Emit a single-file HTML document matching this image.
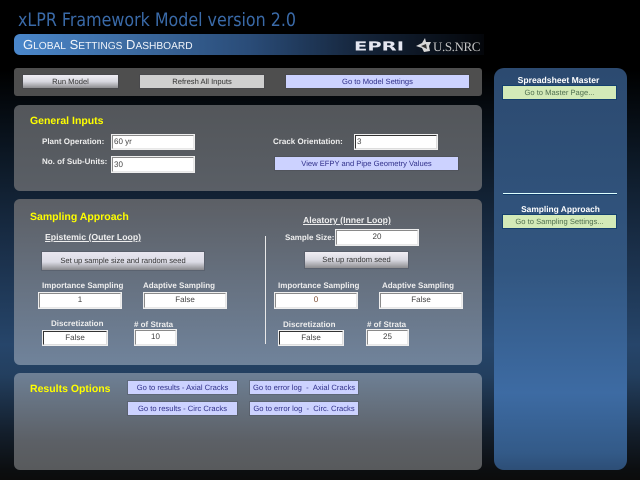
<!DOCTYPE html>
<html><head><meta charset="utf-8"><style>
html,body{margin:0;padding:0;width:640px;height:480px;overflow:hidden;background:#000}
body{position:relative;font-family:"Liberation Sans",sans-serif;text-rendering:geometricPrecision;background:linear-gradient(180deg,#000 0,#000 70px,#0b1622 150px,#1a2f49 250px,#26456a 345px,#233f5f 375px,#14202e 430px,#0c0e10 470px,#0c0c0c 480px)}
div{position:absolute;box-sizing:border-box;white-space:nowrap}
svg{position:absolute;overflow:visible}
.p{left:14px;width:468px}
.b{text-align:center;font-size:7.6px;height:13px;line-height:13px;color:#333;box-shadow:0 0 0 1px rgba(60,60,70,.25)}
.v{background:#ccd2ff;color:#30308a}
.s{background:linear-gradient(180deg,#f0eef4,#d8d8e0 50%,#8d8d90)}
.i{background:#fff;border:2px solid;border-color:#8a8a8a #e8e8e8 #e8e8e8 #8a8a8a;outline:1px solid #eee;outline-offset:-1px;font-size:8px;color:#444;text-align:center;line-height:12px}
.l{color:#eee;font-weight:bold;font-size:8px;text-align:center}
.y{color:#ff0;font-weight:bold;font-size:10.5px;line-height:14px}
.u{color:#eee;font-weight:bold;font-size:8.7px;text-decoration:underline}
.g{background:#d3eab8;color:#4f6f4f;text-align:center;font-size:7.6px;border:1px solid #14406e;height:15px;line-height:13px;left:502px;width:115px}
</style></head><body>
<svg style="left:0;top:0" width="640" height="60"><text x="18" y="26" font-family="DejaVu Sans,sans-serif" font-size="18.5" fill="#3a6aa8" textLength="278" lengthAdjust="spacingAndGlyphs">xLPR Framework Model version 2.0</text></svg>
<div style="left:14px;top:34px;width:470px;height:21px;border-radius:6px 0 0 6px;background:linear-gradient(90deg,#4a87cb 0,#3f70a8 20%,#2a4c78 50%,#142338 75%,#04060a 100%)"></div>
<div style="left:23px;top:36px;color:#f0f4fa;font-size:13px;line-height:18px">G<span style="font-size:10.2px">LOBAL</span> S<span style="font-size:10.2px">ETTINGS</span> D<span style="font-size:10.2px">ASHBOARD</span></div>
<svg style="left:0;top:0" width="640" height="60"><text x="354" y="50.5" font-family="DejaVu Sans,sans-serif" font-weight="bold" font-size="12.5" fill="#e4e6f0" textLength="50" lengthAdjust="spacingAndGlyphs">EPRI</text></svg>
<svg style="left:415px;top:37px" width="18" height="16" viewBox="0 0 18 16"><path d="M1 9L7 6L10 1L11 5L16 5L14 9L15 14L9 15L7 11Z" fill="#d8d8d8"/><path d="M6 9L11 7L12 12Z" fill="#333"/></svg>
<div style="left:433px;top:39px;color:#c4c4c4;font:13px/15px 'Liberation Serif',serif;letter-spacing:-.4px">U.S.NRC</div>

<div class="p" style="top:68px;height:28px;background:#4e4e4e;border-radius:3px"></div>
<div class="b s" style="left:23px;top:75px;width:95px">Run Model</div>
<div class="b" style="left:140px;top:75px;width:124px;background:#cfcfcf">Refresh All Inputs</div>
<div class="b v" style="left:286px;top:75px;width:183px">Go to Model Settings</div>

<div class="p" style="top:105px;height:86px;border-radius:6px;background:linear-gradient(180deg,#53565a,#5a5f66)"></div>
<div class="y" style="left:30px;top:114px">General Inputs</div>
<div class="l" style="left:42px;top:137px">Plant Operation:</div>
<div class="l" style="left:42px;top:157px">No. of Sub-Units:</div>
<div class="i" style="left:111px;top:134px;width:84px;height:16px;text-align:left;padding-left:1px">60 yr</div>
<div class="i" style="left:111px;top:156px;width:84px;height:17px;text-align:left;padding-left:1px;line-height:14px">30</div>
<div class="l" style="left:273px;top:137px">Crack Orientation:</div>
<div class="i" style="left:354px;top:134px;width:84px;height:16px;text-align:left;padding-left:1px;border-color:#333 #ddd #ddd #333">3</div>
<div class="b v" style="left:275px;top:157px;width:183px">View EFPY and Pipe Geometry Values</div>

<div class="p" style="top:199px;height:166px;border-radius:6px;background:linear-gradient(180deg,#5c5f65,#70839b)"></div>
<div class="y" style="left:30px;top:210px">Sampling Approach</div>
<div class="u" style="left:45px;top:232px">Epistemic (Outer Loop)</div>
<div class="b s" style="left:42px;top:252px;width:162px;height:18px;line-height:18px;background:linear-gradient(180deg,#e8e6f0,#dcdce6 55%,#8a8a8e)">Set up sample size and random seed</div>
<div class="l" style="left:42px;top:281px">Importance Sampling</div>
<div class="l" style="left:143px;top:281px">Adaptive Sampling</div>
<div class="i" style="left:38px;top:292px;width:84px;height:17px">1</div>
<div class="i" style="left:143px;top:292px;width:84px;height:17px">False</div>
<div class="l" style="left:51px;top:319px">Discretization</div>
<div class="l" style="left:134px;top:320px"># of Strata</div>
<div class="i" style="left:42px;top:330px;width:66px;height:16px;border-color:#333 #ddd #ddd #333">False</div>
<div class="i" style="left:134px;top:329px;width:43px;height:17px">10</div>

<div style="left:265px;top:236px;width:1px;height:108px;background:#e8e8e8"></div>
<div class="u" style="left:303px;top:215px">Aleatory (Inner Loop)</div>
<div class="l" style="left:285px;top:233px">Sample Size:</div>
<div class="i" style="left:335px;top:229px;width:84px;height:17px">20</div>
<div class="b s" style="left:305px;top:252px;width:103px;height:16px;line-height:16px">Set up random seed</div>
<div class="l" style="left:278px;top:281px">Importance Sampling</div>
<div class="l" style="left:382px;top:281px">Adaptive Sampling</div>
<div class="i" style="left:274px;top:292px;width:84px;height:17px;color:#7a4a30">0</div>
<div class="i" style="left:379px;top:292px;width:84px;height:17px">False</div>
<div class="l" style="left:283px;top:320px">Discretization</div>
<div class="l" style="left:367px;top:320px"># of Strata</div>
<div class="i" style="left:278px;top:330px;width:66px;height:16px;border-color:#333 #ddd #ddd #333">False</div>
<div class="i" style="left:366px;top:329px;width:43px;height:17px">25</div>

<div class="p" style="top:373px;height:97px;border-radius:6px;background:linear-gradient(180deg,#6e8095,#5c6066 70%,#585a5c)"></div>
<div class="y" style="left:30px;top:382px">Results Options</div>
<div class="b v" style="left:128px;top:381px;width:109px">Go to results - Axial Cracks</div>
<div class="b v" style="left:250px;top:381px;width:108px">Go to error log &nbsp;- &nbsp;Axial Cracks</div>
<div class="b v" style="left:128px;top:402px;width:109px">Go to results - Circ Cracks</div>
<div class="b v" style="left:250px;top:402px;width:108px">Go to error log &nbsp;- &nbsp;Circ. Cracks</div>

<div style="left:494px;top:68px;width:133px;height:402px;border-radius:10px;background:linear-gradient(180deg,#2c4a70 0,#325680 200px,#3d6ba3 325px,#335a88 385px,#2d4e76 402px)"></div>
<div class="l" style="left:494px;width:133px;top:75px;font-size:8.6px;padding-right:4px;color:#fff">Spreadsheet Master</div>
<div class="g" style="top:85px">Go to Master Page...</div>
<div style="left:503px;top:193px;width:114px;height:1px;background:#dff;box-shadow:0 1px 0 #103a68"></div>
<div class="l" style="left:494px;width:133px;top:204px;font-size:8.4px;color:#fff">Sampling Approach</div>
<div class="g" style="top:214px">Go to Sampling Settings...</div>
</body></html>
